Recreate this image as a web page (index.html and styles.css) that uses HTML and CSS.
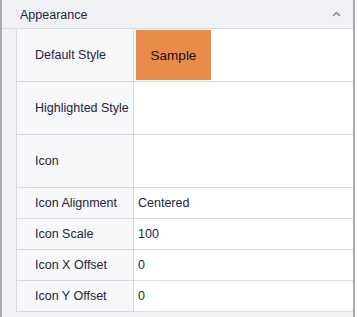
FILE: index.html
```html
<!DOCTYPE html>
<html>
<head>
<meta charset="utf-8">
<link rel="stylesheet" href="styles.css">
</head>
<body>
<div class="panel">
  <div class="header">
    <span class="title">Appearance</span>
    <svg class="chev" width="9" height="6" viewBox="0 0 9 6"><path d="M1 5 L4.5 1.5 L8 5" fill="none" stroke="#8a8c99" stroke-width="1.5"/></svg>
  </div>
  <div class="body">
    <div class="grid">
      <div class="label">Default Style</div>
      <div class="value"><div class="sample">Sample</div></div>
      <div class="label">Highlighted Style</div>
      <div class="value"></div>
      <div class="label">Icon</div>
      <div class="value"></div>
      <div class="label">Icon Alignment</div>
      <div class="value">Centered</div>
      <div class="label">Icon Scale</div>
      <div class="value">100</div>
      <div class="label">Icon X Offset</div>
      <div class="value">0</div>
      <div class="label">Icon Y Offset</div>
      <div class="value">0</div>
    </div>
  </div>
</div>
</body>
</html>
```
FILE: styles.css
```css
html, body {
  margin: 0;
  padding: 0;
  background: #ffffff;
}
body {
  font-family: "Liberation Sans", Arial, sans-serif;
  font-size: 12.5px;
  color: #23233f;
}
.panel {
  width: 351px;
  height: 317px;
  background: #f0f1f4;
  border-left: 2px solid #a9aab5;
  border-right: 2px solid #a9aab5;
  display: flex;
  flex-direction: column;
}
.header {
  height: 28px;
  border-bottom: 1px solid #d9dae0;
  display: flex;
  align-items: center;
  justify-content: space-between;
  padding: 0 12px 0 18px;
}
.title {
  padding-top: 1px;
}
.chev {
  margin-top: -1px;
}
.body {
  padding-left: 14px;
}
.grid {
  display: grid;
  grid-template-columns: 116px 1fr;
  grid-template-rows: 52px 52px 52px 30px 30px 30px 30px;
  border-left: 1px solid #d9dae0;
  border-bottom: 1px solid #d9dae0;
  gap: 1px;
  background: #d9dae0;
}
.label {
  background: #f7f8fa;
  padding-left: 18px;
  display: flex;
  align-items: center;
}
.value {
  background: #ffffff;
  padding-left: 4px;
  display: flex;
  align-items: center;
}
.sample {
  margin-left: -2px;
  width: 75px;
  height: 50px;
  background: #e98c4a;
  color: #111111;
  font-size: 13.5px;
  display: flex;
  align-items: center;
  justify-content: center;
}
```
